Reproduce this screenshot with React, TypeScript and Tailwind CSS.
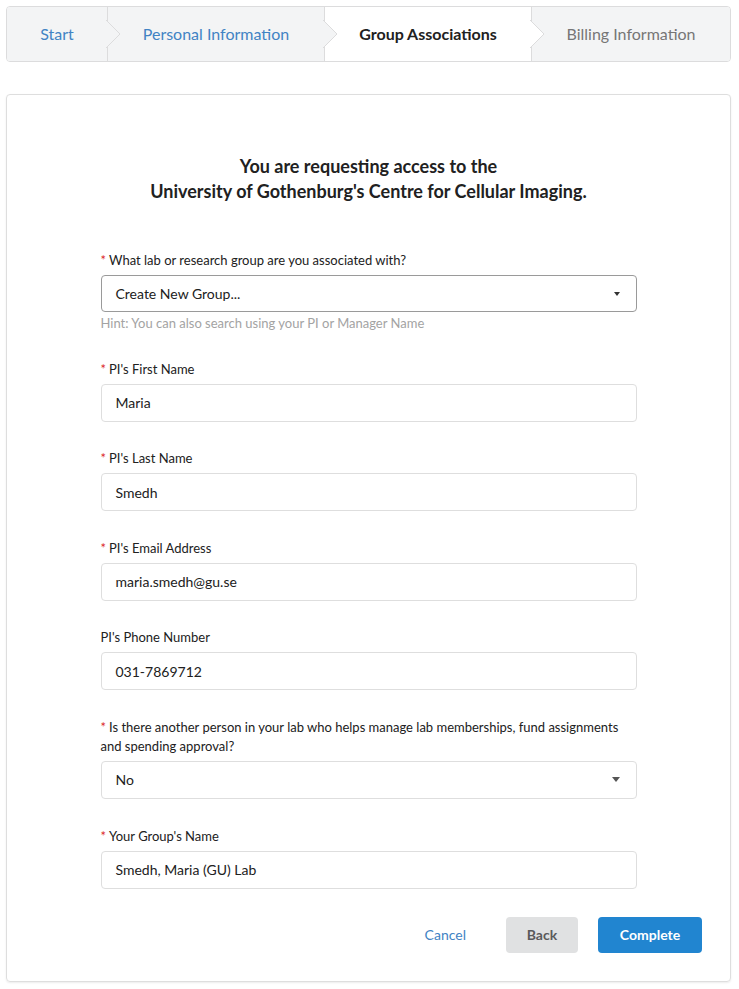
import React from "react";

const steps = [
  { label: "Start", state: "done", w: "w-[101px]" },
  { label: "Personal Information", state: "done", w: "w-[217px]" },
  { label: "Group Associations", state: "active", w: "w-[207px]" },
  { label: "Billing Information", state: "todo", w: "flex-1" },
];

function Chevron({ fill }: { fill: string }) {
  return (
    <svg
      className="absolute top-[13px] -right-[15px] z-10"
      width="16"
      height="28"
      viewBox="0 0 16 28"
    >
      <polygon points="0,0 14,14 0,28" fill={fill} />
      <polyline points="0,0 14,14 0,28" fill="none" stroke="#dcdcdd" strokeWidth="1" />
    </svg>
  );
}

function Label({ text, required }: { text: React.ReactNode; required?: boolean }) {
  return (
    <label className="block text-[13px] leading-[19px] text-[#212121] mb-[5px]">
      {required && <span className="text-[#db2828] mr-[3px]">*</span>}
      {text}
    </label>
  );
}

function TextField({ label, value, required }: { label: string; value: string; required?: boolean }) {
  return (
    <div>
      <Label text={label} required={required} />
      <div className="h-[38px] border border-[#dedede] rounded-[4px] px-[14px] flex items-center text-[14px] text-[#212121] bg-white">
        {value}
      </div>
    </div>
  );
}

export default function App() {
  return (
    <div className="min-h-screen bg-white pt-[6px] pl-[6px] pr-[8px]" style={{ fontFamily: "Lato, 'Open Sans', sans-serif" }}>
      {/* Steps */}
      <div className="flex h-[56px] border border-[#dcdcdd] rounded-[4px] overflow-hidden">
        {steps.map((s, i) => {
          const bg = s.state === "active" ? "#ffffff" : "#f3f4f5";
          const last = i === steps.length - 1;
          return (
            <div
              key={s.label}
              className={
                "relative flex items-center justify-center text-[16px] " +
                s.w +
                " " +
                (last ? "" : "border-r border-[#dcdcdd] ") +
                (s.state === "active"
                  ? "bg-white text-[#212121] font-bold"
                  : s.state === "done"
                  ? "bg-[#f3f4f5] text-[#4183c4]"
                  : "bg-[#f3f4f5] text-[#767676]")
              }
            >
              {s.label}
              {!last && <Chevron fill={bg} />}
            </div>
          );
        })}
      </div>

      {/* Card */}
      <div className="mt-[32px] border border-[#dedede] rounded-[4px] shadow-[0_1px_2px_rgba(0,0,0,0.08)] pt-[59px] pb-[28px] px-[28px]">
        <h1 className="text-center text-[18px] leading-[25px] font-bold text-[#212121]">
          You are requesting access to the
          <br />
          University of Gothenburg's Centre for Cellular Imaging.
        </h1>

        <div className="w-[536px] mx-auto mt-[47px] flex flex-col gap-[27.6px]">
          <div>
            <Label text="What lab or research group are you associated with?" required />
            <div className="h-[37px] border border-[#9a9a9a] rounded-[4px] px-[14px] flex items-center justify-between text-[14px] text-[#212121]">
              <span>Create New Group...</span>
              <span className="w-0 h-0 border-l-[3px] border-r-[3px] border-t-[4px] border-l-transparent border-r-transparent border-t-[#333] mr-[2px]" />
            </div>
            <p className="text-[13px] leading-[18px] mt-[2px] text-[#a3a3a3]">
              Hint: You can also search using your PI or Manager Name
            </p>
          </div>

          <TextField label="PI's First Name" value="Maria" required />
          <TextField label="PI's Last Name" value="Smedh" required />
          <TextField label="PI's Email Address" value="maria.smedh@gu.se" required />
          <TextField label="PI's Phone Number" value="031-7869712" />

          <div>
            <Label
              text={
                <>
                  Is there another person in your lab who helps manage lab memberships, fund assignments
                  <br />
                  and spending approval?
                </>
              }
              required
            />
            <div className="h-[38px] border border-[#dedede] rounded-[4px] px-[14px] flex items-center justify-between text-[14px] text-[#212121]">
              <span>No</span>
              <span className="w-0 h-0 border-l-[4px] border-r-[4px] border-t-[5px] border-l-transparent border-r-transparent border-t-[#555] mr-[2px]" />
            </div>
          </div>

          <TextField label="Your Group's Name" value="Smedh, Maria (GU) Lab" required />
        </div>

        <div className="flex justify-end items-center mt-[28px]">
          <button className="text-[14px] text-[#4183c4] px-[12px] h-[36px] mr-[28px]">Cancel</button>
          <button className="h-[36px] w-[72px] rounded-[4px] bg-[#e0e1e2] text-[#5a5a5a] text-[14px] font-bold mr-[20px]">
            Back
          </button>
          <button className="h-[36px] w-[104px] rounded-[4px] bg-[#2185d0] text-white text-[14px] font-bold">
            Complete
          </button>
        </div>
      </div>
    </div>
  );
}
